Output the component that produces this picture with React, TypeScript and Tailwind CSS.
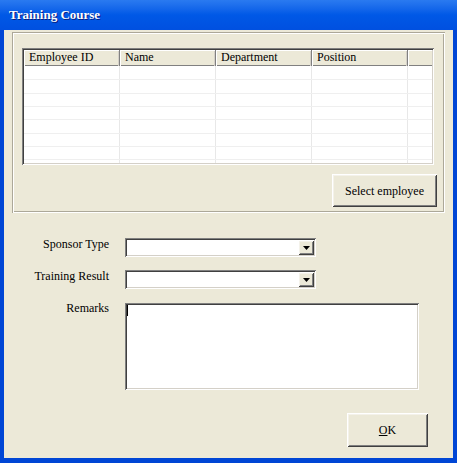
import { useState } from "react";

const COLUMNS = ["Employee ID", "Name", "Department", "Position"];
const ROW_HEIGHTS = ["h-[14px]", "h-[14px]", "h-[13px]", "h-[13px]", "h-[14px]", "h-[13px]", "h-[13px]", "h-[13px]"];

const raised =
  "shadow-[inset_1px_1px_#ffffff,inset_-1px_-1px_#404040,inset_2px_2px_#f4f2ea,inset_-2px_-2px_#808080]";
const sunken =
  "shadow-[inset_1px_1px_#808080,inset_-1px_-1px_#ffffff,inset_2px_2px_#404040,inset_-2px_-2px_#d4d0c8]";

function Combo() {
  return (
    <div className={`w-[191px] h-[19px] bg-white flex justify-end p-[2px] ${sunken}`}>
      <div className={`w-[16px] h-full bg-[#ece9d8] flex items-center justify-center ${raised}`}>
        <svg width="7" height="4" viewBox="0 0 7 4">
          <path d="M0 0h7L3.5 4z" fill="#000" />
        </svg>
      </div>
    </div>
  );
}

export default function App() {
  const [remarks, setRemarks] = useState("");

  return (
    <div className="w-[457px] h-[463px] flex flex-col bg-[#0046d5] font-['Liberation_Serif',serif] text-[12px] text-black">
      {/* Title bar */}
      <div className="h-[30px] shrink-0 flex items-center pl-[9px] bg-gradient-to-b from-[#2a7af0] via-[#0058e6] to-[#0050e0] text-white text-[13px] font-bold [text-shadow:1px_1px_#0a1e80]">
        Training Course
      </div>

      {/* Client area */}
      <div className="flex-1 mx-[4px] mb-[5px] bg-[#ece9d8] flex flex-col">
        {/* Group box */}
        <div className="mt-[2px] ml-[8px] w-[433px] h-[181px] pt-[16px] pl-[10px] flex flex-col shadow-[inset_1px_1px_#aca899,inset_-1px_-1px_#ffffff,inset_2px_2px_#ffffff,inset_-2px_-2px_#aca899]">
          {/* List view */}
          <div className={`w-[412px] h-[117px] bg-white p-[2px] flex flex-col ${sunken}`}>
            <div className="h-[16px] shrink-0 flex bg-[#ece9d8] shadow-[inset_0_-1px_#808080]">
              {COLUMNS.map((c) => (
                <div
                  key={c}
                  className="w-[96px] shrink-0 pl-[5px] leading-[15px] shadow-[inset_-1px_0_#808080,inset_1px_1px_#ffffff,inset_-2px_0_#d4d0c8]"
                >
                  {c}
                </div>
              ))}
              <div className="flex-1 shadow-[inset_1px_1px_#ffffff]" />
            </div>
            <div className="flex-1 overflow-hidden">
              {ROW_HEIGHTS.map((h, i) => (
                <div key={i} className={`${h} flex border-b border-[#efefef]`}>
                  {COLUMNS.map((c) => (
                    <div key={c} className="w-[96px] shrink-0 border-r border-[#e8e8e8]" />
                  ))}
                </div>
              ))}
            </div>
          </div>

          <button
            type="button"
            className={`self-end mr-[8px] mt-[9px] w-[105px] h-[33px] bg-[#ece9d8] ${raised}`}
          >
            Select employee
          </button>
        </div>

        {/* Form */}
        <div className="mt-[25px] flex flex-col">
          <div className="flex items-start">
            <div className="w-[105px] text-right leading-[14px] -mt-[1px]">Sponsor Type</div>
            <div className="ml-[16px]">
              <Combo />
            </div>
          </div>
          <div className="flex items-start mt-[13px]">
            <div className="w-[105px] text-right leading-[14px] -mt-[1px]">Training Result</div>
            <div className="ml-[16px]">
              <Combo />
            </div>
          </div>
          <div className="flex items-start mt-[14px]">
            <div className="w-[105px] text-right leading-[14px] -mt-[2px]">Remarks</div>
            <div className="ml-[16px] relative">
              <textarea
                value={remarks}
                onChange={(e) => setRemarks(e.target.value)}
                className={`block w-[294px] h-[87px] bg-white resize-none outline-none px-[3px] py-[3px] leading-[14px] ${sunken}`}
              />
              {/* caret */}
              {remarks === "" && (
                <div className="absolute left-[2px] top-[2px] w-[1px] h-[11px] bg-black pointer-events-none" />
              )}
            </div>
          </div>
        </div>

        <div className="mt-auto mb-[11px] mr-[25px] self-end">
          <button
            type="button"
            className={`w-[81px] h-[34px] bg-[#ece9d8] ${raised}`}
          >
            <span className="underline">O</span>K
          </button>
        </div>
      </div>
    </div>
  );
}
